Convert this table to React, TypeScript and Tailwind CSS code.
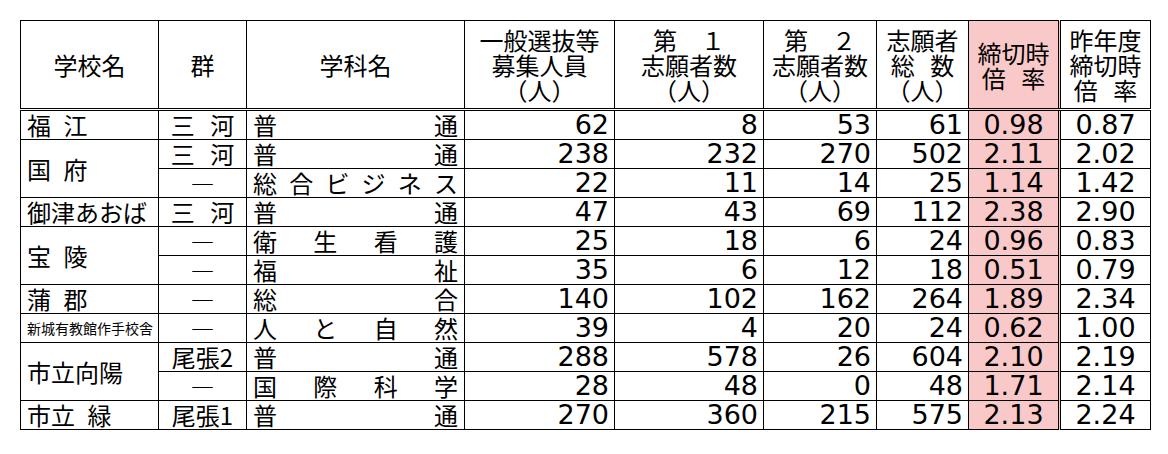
const JP = "font-['Noto_Sans_CJK_JP',sans-serif]";
const NUM = "font-['DejaVu_Sans',sans-serif]";

type Row = {
  school?: string;
  span?: number;
  small?: boolean;
  group: string;
  dept: string[];
  quota: number;
  first: number;
  second: number;
  total: number;
  rate: string;
  prev: string;
};

const ROWS: Row[] = [
  { school: '福 江', span: 1, group: '三 河', dept: ['普', '通'], quota: 62, first: 8, second: 53, total: 61, rate: '0.98', prev: '0.87' },
  { school: '国 府', span: 2, group: '三 河', dept: ['普', '通'], quota: 238, first: 232, second: 270, total: 502, rate: '2.11', prev: '2.02' },
  { group: '―', dept: ['総', '合', 'ビ', 'ジ', 'ネ', 'ス'], quota: 22, first: 11, second: 14, total: 25, rate: '1.14', prev: '1.42' },
  { school: '御津あおば', span: 1, group: '三 河', dept: ['普', '通'], quota: 47, first: 43, second: 69, total: 112, rate: '2.38', prev: '2.90' },
  { school: '宝 陵', span: 2, group: '―', dept: ['衛', '生', '看', '護'], quota: 25, first: 18, second: 6, total: 24, rate: '0.96', prev: '0.83' },
  { group: '―', dept: ['福', '祉'], quota: 35, first: 6, second: 12, total: 18, rate: '0.51', prev: '0.79' },
  { school: '蒲 郡', span: 1, group: '―', dept: ['総', '合'], quota: 140, first: 102, second: 162, total: 264, rate: '1.89', prev: '2.34' },
  { school: '新城有教館作手校舎', span: 1, small: true, group: '―', dept: ['人', 'と', '自', '然'], quota: 39, first: 4, second: 20, total: 24, rate: '0.62', prev: '1.00' },
  { school: '市立向陽', span: 2, group: '尾張2', dept: ['普', '通'], quota: 288, first: 578, second: 26, total: 604, rate: '2.10', prev: '2.19' },
  { group: '―', dept: ['国', '際', '科', '学'], quota: 28, first: 48, second: 0, total: 48, rate: '1.71', prev: '2.14' },
  { school: '市立 緑', span: 1, group: '尾張1', dept: ['普', '通'], quota: 270, first: 360, second: 215, total: 575, rate: '2.13', prev: '2.24' },
];

const WIDTHS = [138, 88, 218, 150, 149, 113, 92, 91, 91];

const th = `border border-black border-b-[3px] [border-bottom-style:double] font-normal text-center align-middle ${JP} text-[24px] leading-[25px] [word-spacing:10px]`;
const td = 'border border-black p-0 align-middle';
const num = `${td} ${NUM} text-[27px] leading-[28px] text-right pr-[5px]`;

export default function App() {
  return (
    <div className="bg-white w-[1168px] h-[454px] pt-[20px] pl-[20px] text-black">
      <table className="table-fixed border-collapse w-[1131px]">
        <colgroup>
          {WIDTHS.map((w, i) => (
            <col key={i} style={{ width: w }} />
          ))}
        </colgroup>
        <thead>
          <tr className="h-[89px]">
            <th className={th}>学校名</th>
            <th className={th}>群</th>
            <th className={th}>学科名</th>
            <th className={th}>一般選抜等<br />募集人員<br />（人）</th>
            <th className={th}>第　１<br />志願者数<br />（人）</th>
            <th className={th}>第　２<br />志願者数<br />（人）</th>
            <th className={th}>志願者<br />総 数<br />（人）</th>
            <th className={`${th} bg-[#f9c9c9]`}>締切時<br />倍 率</th>
            <th className={`${th} border-l-[3px] [border-left-style:double]`}>昨年度<br />締切時<br />倍 率</th>
          </tr>
        </thead>
        <tbody>
          {ROWS.map((r, i) => (
            <tr key={i} className="h-[29px]">
              {r.school && (
                <td
                  rowSpan={r.span}
                  className={`${td} ${JP} pl-[6px] whitespace-nowrap [word-spacing:7px] ${
                    r.small ? 'text-[14px] leading-[18px]' : 'text-[24px] leading-[28px]'
                  }`}
                >
                  {r.school}
                </td>
              )}
              <td className={`${td} ${JP} text-[24px] leading-[28px] text-center [word-spacing:10px]`}>
                {r.group}
              </td>
              <td className={`${td} ${JP} text-[24px] leading-[28px] px-[6px]`}>
                <div className="flex justify-between">
                  {r.dept.map((c, j) => (
                    <span key={j}>{c}</span>
                  ))}
                </div>
              </td>
              <td className={num}>{r.quota}</td>
              <td className={num}>{r.first}</td>
              <td className={num}>{r.second}</td>
              <td className={num}>{r.total}</td>
              <td className={`${td} ${NUM} text-[27px] leading-[28px] text-center bg-[#f9c9c9]`}>{r.rate}</td>
              <td className={`${td} ${NUM} text-[27px] leading-[28px] text-center border-l-[3px] [border-left-style:double]`}>
                {r.prev}
              </td>
            </tr>
          ))}
        </tbody>
      </table>
    </div>
  );
}
